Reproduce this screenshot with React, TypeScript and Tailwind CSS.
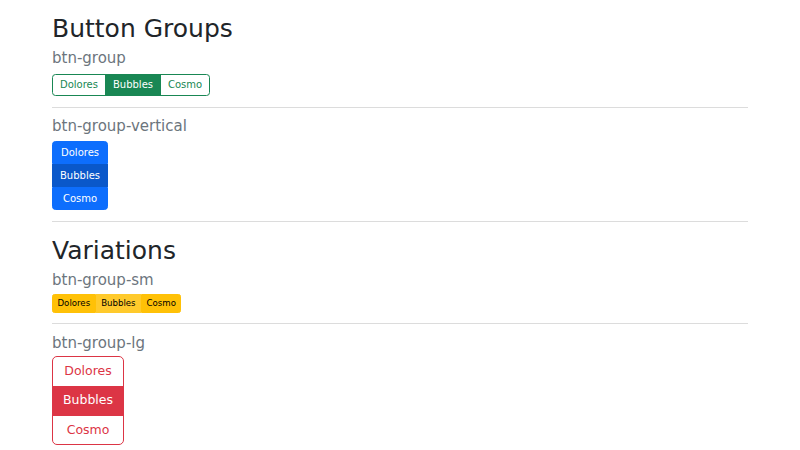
const labels = ["Dolores", "Bubbles", "Cosmo"];

function Title({ children, className = "" }: { children: string; className?: string }) {
  return <h1 className={`text-[25px] leading-[30px] ${className}`}>{children}</h1>;
}

function Sub({ children, className = "" }: { children: string; className?: string }) {
  return <h5 className={`text-[15px] leading-[18px] text-[#6c757d] ${className}`}>{children}</h5>;
}

function Divider({ className = "" }: { className?: string }) {
  return <hr className={`border-0 border-t border-[#dcdcdc] ${className}`} />;
}

export default function App() {
  return (
    <div className="min-h-screen bg-white font-['DejaVu_Sans',sans-serif] text-[#212529]">
      <div className="mx-auto w-[696px] pt-[13.5px]">
        <Title className="mb-[5.5px]">Button Groups</Title>
        <Sub className="mb-[6.5px]">btn-group</Sub>
        <div className="flex w-fit">
          <button className="rounded-l-[3.5px] border border-[#198754] px-[7px] py-[2.7px] text-[10px] leading-[15px] text-[#198754]">
            {labels[0]}
          </button>
          <button className="-ml-px border border-[#198754] bg-[#198754] px-[7px] py-[2.7px] text-[10px] leading-[15px] text-white">
            {labels[1]}
          </button>
          <button className="-ml-px rounded-r-[3.5px] border border-[#198754] px-[7px] py-[2.7px] text-[10px] leading-[15px] text-[#198754]">
            {labels[2]}
          </button>
        </div>

        <Divider className="mt-[11.3px] mb-[8.8px]" />

        <Sub className="mb-[5.8px]">btn-group-vertical</Sub>
        <div className="flex w-fit flex-col">
          <button className="rounded-t-[3.5px] border border-[#0d6efd] bg-[#0d6efd] px-[7px] py-[3.1px] text-[10px] leading-[15px] text-white">
            {labels[0]}
          </button>
          <button className="border border-[#0a58ca] bg-[#0a58ca] px-[7px] py-[3.1px] text-[10px] leading-[15px] text-white">
            {labels[1]}
          </button>
          <button className="rounded-b-[3.5px] border border-[#0d6efd] bg-[#0d6efd] px-[7px] py-[3.1px] text-[10px] leading-[15px] text-white">
            {labels[2]}
          </button>
        </div>

        <Divider className="mt-[10.8px] mb-[13.5px]" />

        <Title className="mb-[5px]">Variations</Title>
        <Sub className="mb-[5px]">btn-group-sm</Sub>
        <div className="flex w-fit">
          <button className="rounded-l-[2.5px] border border-[#ffc107] bg-[#ffc107] px-[4.5px] py-[2.2px] text-[8.6px] leading-[13px] text-black">
            {labels[0]}
          </button>
          <button className="border border-[#ffca2c] bg-[#ffca2c] px-[4.5px] py-[2.2px] text-[8.6px] leading-[13px] text-black">
            {labels[1]}
          </button>
          <button className="rounded-r-[2.5px] border border-[#ffc107] bg-[#ffc107] px-[4.5px] py-[2.2px] text-[8.6px] leading-[13px] text-black">
            {labels[2]}
          </button>
        </div>

        <Divider className="mt-[9.6px] mb-[10px]" />

        <Sub className="mb-[4.6px]">btn-group-lg</Sub>
        <div className="flex w-fit flex-col">
          <button className="rounded-t-[5px] border border-[#dc3545] px-[10px] py-[4.8px] text-[12.5px] leading-[18.75px] text-[#dc3545]">
            {labels[0]}
          </button>
          <button className="-mt-px border border-[#dc3545] bg-[#dc3545] px-[10px] py-[4.8px] text-[12.5px] leading-[18.75px] text-white">
            {labels[1]}
          </button>
          <button className="-mt-px rounded-b-[5px] border border-[#dc3545] px-[10px] py-[4.8px] text-[12.5px] leading-[18.75px] text-[#dc3545]">
            {labels[2]}
          </button>
        </div>
      </div>
    </div>
  );
}
